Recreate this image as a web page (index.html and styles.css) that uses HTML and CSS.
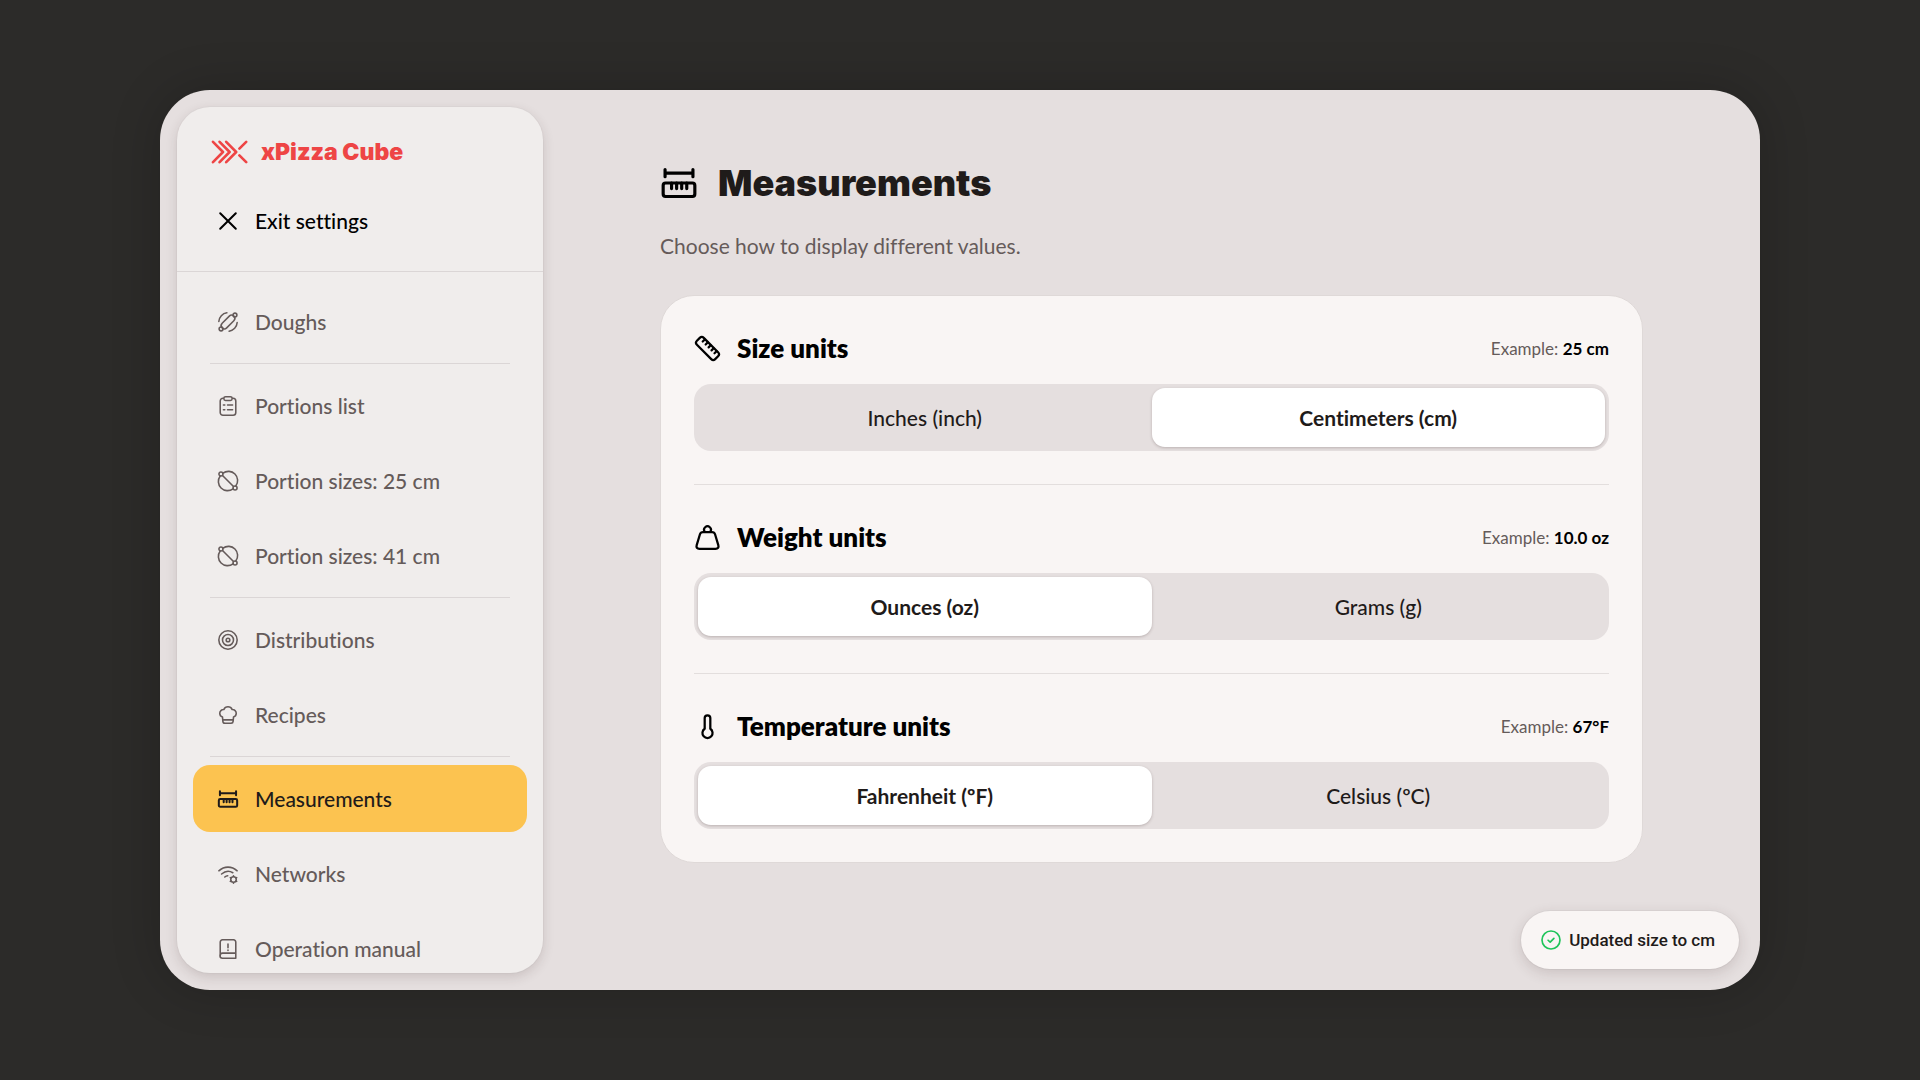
FILE: index.html
```
<!DOCTYPE html>
<html lang="en">
<head>
    <meta charset="UTF-8">
    <meta name="viewport" content="width=device-width, initial-scale=1.0">
    <title>xPizza Cube - Measurements</title>
    <link rel="stylesheet" href="styles.css">
</head>
<body>
    <div class="app">
        <!-- Sidebar -->
        <aside class="sidebar">
            <div class="sidebar-header">
                <div class="logo">
                    <svg class="logo-mark" viewBox="0 0 37 24" aria-hidden="true">
                        <path d="M2 1.8 12 12 2 22.2M8.6 1.8 18.6 12 8.6 22.2M15.2 1.8 25.2 12 15.2 22.2M35.2 1.8 28.4 8.6M28.4 15.4 35.2 22.2"/>
                    </svg>
                    <span>xPizza Cube</span>
                </div>
                <a class="nav-item exit" href="#">
                    <svg class="icon" viewBox="0 0 24 24" aria-hidden="true"><path d="M3.5 3.5l17 17M20.5 3.5l-17 17"/></svg>
                    Exit settings
                </a>
            </div>

            <nav class="nav">
                <a class="nav-item" href="#">
                    <svg class="icon" viewBox="0 0 24 24" aria-hidden="true">
                        <circle cx="4.4" cy="19.6" r="2.1"/>
                        <circle cx="19.6" cy="4.4" r="2.1"/>
                        <rect x="3" y="8.5" width="18" height="7" rx="3.5" transform="rotate(-45 12 12)"/>
                        <path d="M2 11.500C2.300 6.500 6 2.600 10.800 2M22 12.500c-.3 5-4 8.900-8.800 9.500"/>
                    </svg>
                    Doughs
                </a>
                <hr>
                <a class="nav-item" href="#">
                    <svg class="icon" viewBox="0 0 24 24" aria-hidden="true">
                        <rect x="3.5" y="3.5" width="17" height="18.5" rx="3"/>
                        <rect x="7.5" y="2" width="9" height="4" rx="1.8" class="on-panel"/>
                        <path d="M11.5 11H17M11.5 16H17M7 11h1.500M7 16h1.500"/>
                    </svg>
                    Portions list
                </a>
                <a class="nav-item" href="#">
                    <svg class="icon" viewBox="0 0 24 24" aria-hidden="true">
                        <g id="pizza-size">
                            <path d="M6.500 3.500A10 10 0 0 1 20.500 17.500M17.500 20.500A10 10 0 0 1 3.500 6.500"/>
                            <circle cx="4.300" cy="4.300" r="2.200"/>
                            <circle cx="19.700" cy="19.700" r="2.200"/>
                            <path d="M6 6l12 12"/>
                        </g>
                    </svg>
                    Portion sizes: 25 cm
                </a>
                <a class="nav-item" href="#">
                    <svg class="icon" viewBox="0 0 24 24" aria-hidden="true"><use href="#pizza-size"/></svg>
                    Portion sizes: 41 cm
                </a>
                <hr>
                <a class="nav-item" href="#">
                    <svg class="icon" viewBox="0 0 24 24" aria-hidden="true">
                        <circle cx="12" cy="12" r="10"/>
                        <circle cx="12" cy="12" r="6"/>
                        <circle cx="12" cy="12" r="2"/>
                    </svg>
                    Distributions
                </a>
                <a class="nav-item" href="#">
                    <svg class="icon" viewBox="0 0 24 24" aria-hidden="true">
                        <path d="M6 14.300C4.300 13.800 3 12.400 3 10.200 3 7.700 4.900 6 7.400 6.100 8.200 4.200 10 3 12 3s3.800 1.200 4.600 3.100C19.100 6 21 7.700 21 10.200c0 2.200-1.300 3.600-3 4.100L17.600 19c-.1 1.300-.9 2-2.200 2H8.600c-1.300 0-2.100-.7-2.200-2L6 14.300zM6.300 17.300h11.400"/>
                    </svg>
                    Recipes
                </a>
                <hr>
                <a class="nav-item active" href="#" aria-current="page">
                    <svg class="icon" viewBox="0 0 24 24" aria-hidden="true"><use href="#measure"/></svg>
                    Measurements
                </a>
                <a class="nav-item" href="#">
                    <svg class="icon" viewBox="0 0 24 24" aria-hidden="true">
                        <path d="M2 8.500c6-5.300 14-5.300 20 0M5 12c3.500-3 8.500-3.700 12.300-1.400M8.500 15.300c1-.9 2-1.300 3.200-1.400"/>
                        <circle cx="18" cy="18" r="3"/>
                        <path d="M18 14v.5M18 21.500v.5M14.500 16l.5.300M21 19.700l.5.300M21.500 16l-.5.300M15 19.700l-.5.300"/>
                    </svg>
                    Networks
                </a>
                <a class="nav-item" href="#">
                    <svg class="icon" viewBox="0 0 24 24" aria-hidden="true">
                        <path d="M20.500 16.500V4.500c0-1.500-1-2.500-2.500-2.500H6C4.500 2 3.500 3 3.500 4.500v15M20.500 16.500H6a2.700 2.700 0 0 0 0 5.500h14.500M20.500 16.500V22M12 6.500v4M12 13v.5"/>
                    </svg>
                    Operation manual
                </a>
            </nav>
        </aside>

        <!-- Main content -->
        <main class="content">
            <h1>
                <svg class="title-icon" viewBox="0 0 24 24" aria-hidden="true">
                    <g id="measure">
                        <path d="M3.200 3.500v4.500M20.800 3.500v4.500M3.200 5.800h17.600"/>
                        <rect x="2" y="12" width="20" height="8.500" rx="1.500"/>
                        <path d="M7.300 12v3.500M10.500 12v3.500M13.700 12v3.500M16.900 12v3.500"/>
                    </g>
                </svg>
                Measurements
            </h1>
            <p class="subtitle">Choose how to display different values.</p>

            <form class="card">
                <section class="setting">
                    <div class="setting-header">
                        <svg class="setting-icon" viewBox="0 0 24 24" aria-hidden="true">
                            <g transform="rotate(45 12 12)">
                                <rect x="0.500" y="7.700" width="23" height="8.600" rx="2.500"/>
                                <path d="M4.600 8v2.600M8.300 8v2.600M12 8v2.600M15.700 8v2.600M19.400 8v2.600"/>
                            </g>
                        </svg>
                        <h2 id="size-title">Size units</h2>
                        <p class="example">Example: <strong>25 cm</strong></p>
                    </div>
                    <div class="toggle" role="radiogroup" aria-labelledby="size-title">
                        <input type="radio" name="size" id="size-inch">
                        <label for="size-inch">Inches (inch)</label>
                        <input type="radio" name="size" id="size-cm" checked>
                        <label for="size-cm">Centimeters (cm)</label>
                    </div>
                </section>

                <section class="setting">
                    <div class="setting-header">
                        <svg class="setting-icon" viewBox="0 0 24 24" aria-hidden="true">
                            <path d="M8 7.200h8c1.400 0 2.300.6 2.700 1.900l2.900 9.700c.6 2-.3 3.200-2.400 3.200H4.800c-2.100 0-3-1.200-2.400-3.200L5.300 9.100C5.700 7.800 6.600 7.200 8 7.200z"/>
                            <path d="M9.700 7a3 3 0 1 1 4.600 0"/>
                        </svg>
                        <h2 id="weight-title">Weight units</h2>
                        <p class="example">Example: <strong>10.0 oz</strong></p>
                    </div>
                    <div class="toggle" role="radiogroup" aria-labelledby="weight-title">
                        <input type="radio" name="weight" id="weight-oz" checked>
                        <label for="weight-oz">Ounces (oz)</label>
                        <input type="radio" name="weight" id="weight-g">
                        <label for="weight-g">Grams (g)</label>
                    </div>
                </section>

                <section class="setting">
                    <div class="setting-header">
                        <svg class="setting-icon" viewBox="0 0 24 24" aria-hidden="true">
                            <path d="M9.500 4.500a2.500 2.500 0 0 1 5 0v9.500a4.500 4.500 0 1 1-5 0z"/>
                        </svg>
                        <h2 id="temperature-title">Temperature units</h2>
                        <p class="example">Example: <strong>67°F</strong></p>
                    </div>
                    <div class="toggle" role="radiogroup" aria-labelledby="temperature-title">
                        <input type="radio" name="temperature" id="temperature-f" checked>
                        <label for="temperature-f">Fahrenheit (ºF)</label>
                        <input type="radio" name="temperature" id="temperature-c">
                        <label for="temperature-c">Celsius (ºC)</label>
                    </div>
                </section>
            </form>
        </main>

        <!-- Toast message -->
        <div class="toast" role="status">
            <svg class="toast-icon" viewBox="0 0 24 24" aria-hidden="true">
                <circle cx="12" cy="12" r="10.800"/>
                <path d="M8.500 12.300l2.500 2.300 4.500-4.500"/>
            </svg>
            Updated size to cm
        </div>
    </div>
</body>
</html>
```

FILE: styles.css
```
* {
    box-sizing: border-box;
}
body {
    margin: 0;
    min-height: 100vh;
    padding: 90px 160px;
    display: flex;
    background-color: #2c2b29;
    font-family: Lato, "Open Sans", sans-serif;
    font-size: 21px;
    font-variant-ligatures: none;
    color: #1f1b1a;
}
h1, h2, p {
    margin: 0;
}
svg {
    flex: none;
    fill: none;
    stroke: currentColor;
    stroke-linecap: round;
    stroke-linejoin: round;
}
.app {
    position: relative;
    flex: 1;
    height: calc(100vh - 180px);
    padding: 17px;
    display: flex;
    background-color: #e5dfdf;
    border-radius: 50px;
    box-shadow: 0 0 50px rgba(0, 0, 0, 0.2);
    overflow: hidden;
}

/* Sidebar */
.sidebar {
    flex: 0 0 366px;
    display: flex;
    flex-direction: column;
    background-color: #f0edec;
    border-radius: 33px;
    box-shadow: 0 0 0 1px rgba(0, 0, 0, 0.02), 0 4px 12px rgba(60, 40, 40, 0.16);
    overflow: hidden;
}
.sidebar-header {
    padding: 24px 16px 17px;
    border-bottom: 1px solid #dbd6d6;
}
.logo {
    display: flex;
    align-items: center;
    gap: 13px;
    height: 42px;
    padding-left: 18px;
    color: #ee4545;
    font-family: Inter, sans-serif;
    font-size: 23px;
    font-weight: 900;
}
.logo-mark {
    width: 37px;
    height: 24px;
    stroke-width: 2.6;
}
.nav {
    display: flex;
    flex-direction: column;
    gap: 8px;
    padding: 16px;
}
.nav-item {
    flex: none;
    display: flex;
    align-items: center;
    gap: 16px;
    height: 67px;
    padding: 0 24px;
    border-radius: 17px;
    color: #655b5a;
    font-weight: 500;
    text-decoration: none;
}
.nav-item.exit {
    margin-top: 14px;
    color: #000;
}
.nav-item.active {
    background-color: #fcc350;
    color: #1f1b1a;
}
.nav hr {
    flex: none;
    width: calc(100% - 34px);
    height: 1px;
    margin: 0 auto;
    border: none;
    background-color: #dbd6d6;
}
.icon {
    width: 22px;
    height: 22px;
    stroke-width: 1.7;
}
.exit .icon, .active .icon {
    stroke-width: 2.2;
}
.on-panel {
    fill: #f0edec;
}

/* Main content */
.content {
    flex: 1;
    padding: 50px 100px 0 117px;
}
h1 {
    display: flex;
    align-items: center;
    gap: 20px;
    height: 52px;
    font-family: Inter, sans-serif;
    font-size: 36px;
    font-weight: 900;
}
.title-icon {
    width: 38px;
    height: 38px;
    color: #000;
    stroke-width: 2;
}
.subtitle {
    margin: 24px 0 36px;
    line-height: 26px;
    color: #655b5a;
}
.card {
    padding: 0 33px;
    background-color: #f9f5f4;
    border: 1px solid #dfd9d8;
    border-radius: 34px;
}
.setting {
    padding: 33px 0;
}
.setting + .setting {
    border-top: 1px solid #e3dedd;
}
.setting-header {
    display: flex;
    align-items: center;
    gap: 16px;
    height: 38px;
    margin-bottom: 17px;
}
.setting-icon {
    width: 27px;
    height: 27px;
    color: #000;
    stroke-width: 2;
}
h2 {
    flex: 1;
    color: #000;
    font-size: 26px;
    font-weight: 800;
}
.example {
    font-size: 17px;
    color: #655b5a;
}
.example strong {
    color: #000;
}
.toggle {
    display: flex;
    padding: 4px;
    background-color: #e5dfdf;
    border-radius: 17px;
}
.toggle input {
    position: absolute;
    opacity: 0;
}
.toggle label {
    flex: 1 1 0;
    border-radius: 13px;
    font-weight: 500;
    line-height: 59px;
    text-align: center;
    cursor: pointer;
}
.toggle input:checked + label {
    background-color: #fff;
    font-weight: 700;
    box-shadow: 0 1px 3px rgba(60, 40, 40, 0.25);
}

/* Toast */
.toast {
    position: absolute;
    right: 21px;
    bottom: 21px;
    display: flex;
    align-items: center;
    gap: 8px;
    height: 58px;
    padding: 0 24px 0 20px;
    background-color: #f9f5f4;
    border-radius: 29px;
    box-shadow: 0 0 0 1px rgba(0, 0, 0, 0.03), 0 4px 14px rgba(60, 40, 40, 0.16);
    font-family: Roboto, sans-serif;
    font-size: 17px;
    font-weight: 500;
}
.toast-icon {
    width: 20px;
    height: 20px;
    color: #1fc45a;
    stroke-width: 2;
}
```
